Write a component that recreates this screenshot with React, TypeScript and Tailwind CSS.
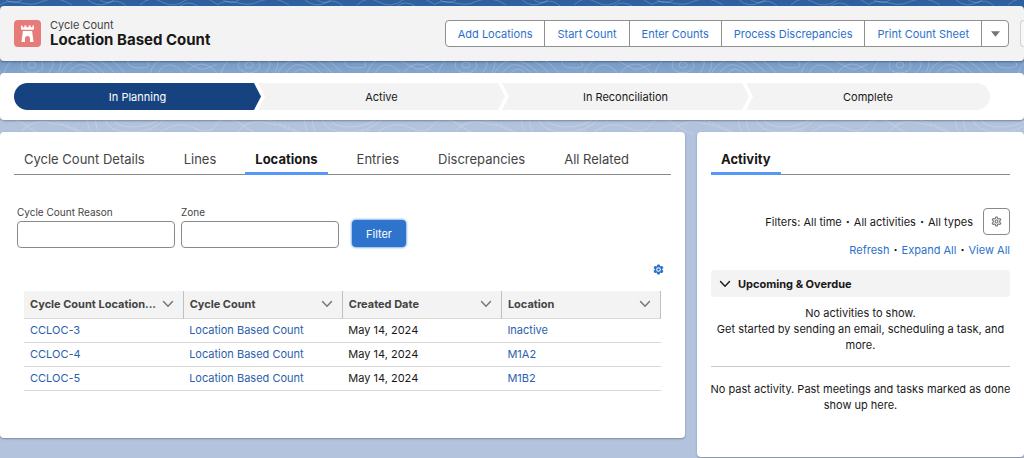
import { useState } from "react";

const actions = ["Add Locations", "Start Count", "Enter Counts", "Process Discrepancies", "Print Count Sheet"];
const stages = ["In Planning", "Active", "In Reconciliation", "Complete"];
const tabs = ["Cycle Count Details", "Lines", "Locations", "Entries", "Discrepancies", "All Related"];
const columns = ["Cycle Count Location...", "Cycle Count", "Created Date", "Location"];
const rows = [
  { id: "CCLOC-3", count: "Location Based Count", date: "May 14, 2024", location: "Inactive" },
  { id: "CCLOC-4", count: "Location Based Count", date: "May 14, 2024", location: "M1A2" },
  { id: "CCLOC-5", count: "Location Based Count", date: "May 14, 2024", location: "M1B2" },
];

function Contours() {
  return (
    <svg className="absolute inset-0 -z-10 h-40 w-full" aria-hidden="true">
      <defs>
        <pattern id="contours" width="217" height="160" patternUnits="userSpaceOnUse">
          <g fill="none" stroke="#fff" strokeOpacity="0.2" strokeWidth="1">
            <ellipse cx="32" cy="65" rx="4" ry="3" />
            <ellipse cx="32" cy="65" rx="11" ry="8" />
            <path d="M4 73C10 56 24 50 40 52S56 66 48 73" />
            <path d="M-6 73C2 48 24 44 42 47S66 62 56 75" />
            <path d="M60 74C72 52 92 60 104 73M68 74C78 58 90 66 98 74M76 74q8-10 16 0" />
            <path d="M50 62C72 50 96 52 116 74M54 58C78 46 104 48 126 74" />
            <path d="M128 60q10-8 18 0t-6 8-12-8M150 74C154 58 170 54 186 62S200 72 217 64" />
            <path d="M158 74C162 62 176 62 184 74M186 74C194 62 206 60 217 73" />
            <path d="M0 5C12-4 26 8 38 3S60-3 72 5M88 0q10 8 20 3t18 3M140 5q10-10 22-3t24-2 31 4" />
            <path d="M100 0q8 5 14 0M180 6q8-6 18 0M6 0q8 5 16 0" />
            <path d="M0 122q14-6 24 2t18 10M20 134q8-14 26-12t34 10M88 118q-2 12 8 18M96 118q-2 10 6 18" />
            <path d="M104 118q4 14 26 14t34-12M112 118q4 9 20 9t28-8M160 132q18-12 34-4t23-4" />
            <path d="M120 132q14 3 34-2M52 120q14 4 30 12" strokeDasharray="3 2" />
            <path d="M4 136q5 14-4 22M12 136q6 18-6 28M208 136q-10 12 9 22" />
          </g>
        </pattern>
      </defs>
      <rect width="100%" height="100%" fill="url(#contours)" />
    </svg>
  );
}

function Castle() {
  return (
    <svg viewBox="0 0 27 27" className="size-[27px] rounded bg-[#e77b79]" aria-hidden="true">
      <path
        fill="#fff"
        d="M7 5.600h1.500v1.700h1.900V5.600h2v1.700h2.200V5.600h2v1.700h1.900V5.600H20v3.200a1 1 0 0 1-1 1H8a1 1 0 0 1-1-1zM8.900 11h9.200l1.400 10.400a.5.5 0 0 1-.5.600h-3V18.400a2.500 2.500 0 0 0-5 0V22H8a.5.5 0 0 1-.5-.6z"
      />
    </svg>
  );
}

const gearPath =
  "M10.300 2.300h3.400l.7 3.200 2 1.100 3.200-1 1.700 2.900-2.400 2.300v2.400l2.400 2.300-1.700 2.900-3.200-1-2 1.100-.7 3.200h-3.400l-.7-3.200-2-1.100-3.200 1-1.700-2.900 2.400-2.300v-2.400L2.700 8.500l1.700-2.900 3.200 1 2-1.100z";

function Gear({ className, solid = false }: { className: string; solid?: boolean }) {
  return (
    <svg viewBox="0 0 24 24" className={className} aria-hidden="true" fill="none" stroke="currentColor">
      <path strokeWidth="2.400" strokeLinejoin="round" fill={solid ? "currentColor" : "none"} d={gearPath} />
      {solid ? (
        <circle cx="12" cy="12" r="4" stroke="#fff" strokeWidth="2.200" />
      ) : (
        <circle cx="12" cy="12" r="3.200" strokeWidth="2.400" />
      )}
    </svg>
  );
}

function Chevron({ className }: { className: string }) {
  return (
    <svg viewBox="0 0 12 12" className={className} aria-hidden="true">
      <path d="M1.500 3.500L6 8.300l4.500-4.800" fill="none" stroke="currentColor" strokeWidth="1.400" strokeLinecap="round" />
    </svg>
  );
}

function Dot() {
  return <span className="mx-1 font-black">·</span>;
}

export default function App() {
  const [tab, setTab] = useState("Locations");

  return (
    <main className="relative isolate flex min-h-screen flex-col gap-3 overflow-hidden bg-[#b3c3dd] bg-[linear-gradient(180deg,#2c5f9e_0px,#2f62a0_6px,#6b92c2_56px,#86a5cd_72px,#b3c3dd_124px)] bg-no-repeat pt-[6px] font-['Inter','Liberation_Sans',sans-serif] text-[11px] leading-4 text-[#181818]">
      <Contours />

      <header className="flex h-[55px] items-center rounded bg-[#f3f3f3] pl-[14px] shadow-[0_1px_2px_rgba(0,0,0,0.3)]">
        <Castle />
        <div className="ml-[9px] grow">
          <p className="leading-[13px] text-[#444]">Cycle Count</p>
          <h1 className="text-[15px] leading-4 font-bold">Location Based Count</h1>
        </div>
        <div className="flex h-[27px] divide-x divide-[#8f8f8f] overflow-hidden rounded border border-[#8f8f8f] bg-white text-[#2b71cb]">
          {actions.map((action) => (
            <button key={action} className="px-3 whitespace-nowrap">
              {action}
            </button>
          ))}
          <button aria-label="More actions" className="flex w-[26px] items-center justify-center text-[#747474]">
            <svg viewBox="0 0 10 6" className="h-[6px] w-[9px]" aria-hidden="true">
              <path d="M0 0h10L5 6z" fill="currentColor" />
            </svg>
          </button>
        </div>
        <div className="ml-[11px] h-[27px] w-[4px] rounded-l border border-r-0 border-[#d0d0d0] bg-[#f8f8f8]" />
      </header>

      <nav aria-label="Stage" className="rounded bg-white py-[10px] pr-[34px] pl-[14px] shadow-[0_1px_2px_rgba(0,0,0,0.3)]">
        <ol className="flex h-[27px] overflow-hidden rounded-full">
          {stages.map((stage, i) => (
            <li key={stage} className="flex flex-1">
              <a
                href="#"
                className={
                  i === 0
                    ? "-mr-[3px] flex grow items-center justify-center bg-[#16437f] text-white [clip-path:polygon(0_0,calc(100%-7px)_0,100%_50%,calc(100%-7px)_100%,0_100%)]"
                    : i === stages.length - 1
                      ? "flex grow items-center justify-center bg-[#f3f3f3] [clip-path:polygon(0_0,100%_0,100%_100%,0_100%,7px_50%)]"
                      : "-mr-[3px] flex grow items-center justify-center bg-[#f3f3f3] [clip-path:polygon(0_0,calc(100%-7px)_0,100%_50%,calc(100%-7px)_100%,0_100%,7px_50%)]"
                }
              >
                {stage}
              </a>
            </li>
          ))}
        </ol>
      </nav>

      <div className="flex grow items-start gap-3">
        <section className="min-w-0 grow rounded bg-white px-[14px] pt-[10px] pb-[47px] shadow-[0_1px_2px_rgba(0,0,0,0.3)]">
          <div role="tablist" className="flex h-[33px] gap-[19px] border-b border-[#8a8a8a] text-[13px]">
            {tabs.map((name) => (
              <button
                key={name}
                role="tab"
                aria-selected={name === tab}
                onClick={() => setTab(name)}
                className={
                  name === tab
                    ? "-mb-px border-b-3 border-[#5797f5] px-[10px] pt-1 font-bold whitespace-nowrap"
                    : "-mb-px border-b-3 border-transparent px-[10px] pt-1 whitespace-nowrap text-[#444]"
                }
              >
                {name}
              </button>
            ))}
          </div>

          <form className="mt-[29px] flex items-end gap-[6px] pl-[3px]" onSubmit={(e) => e.preventDefault()}>
            <label className="flex w-[158px] flex-col gap-px text-[10px] text-[#444]">
              Cycle Count Reason
              <input className="h-[27px] rounded border border-[#8a8a8a] px-2 text-[11px]" />
            </label>
            <label className="flex w-[158px] flex-col gap-px text-[10px] text-[#444]">
              Zone
              <input className="h-[27px] rounded border border-[#8a8a8a] px-2 text-[11px]" />
            </label>
            <button className="mb-px ml-[7px] h-[27px] w-[54px] rounded bg-[#2e74cc] text-white shadow-[0_0_2px_1px_#8db8ee]">Filter</button>
          </form>

          <div className="mt-4 flex justify-end pr-[7px]">
            <button aria-label="Table settings" className="text-[#2b71cb]">
              <Gear className="size-[11px]" solid />
            </button>
          </div>

          <div className="mt-4 pr-[10px] pl-[10px]">
            <table className="w-full table-fixed border-collapse text-left">
              <thead>
                <tr className="h-[27px] border-b border-[#dddbda] bg-[#f3f3f3] text-[#444]">
                  {columns.map((column) => (
                    <th key={column} className="border-r border-[#c0c0c0] p-0 px-[6px] font-bold">
                      <div className="flex items-center justify-between whitespace-nowrap">
                        {column}
                        <Chevron className="mr-[3px] size-[12px] shrink-0 text-[#747474]" />
                      </div>
                    </th>
                  ))}
                </tr>
              </thead>
              <tbody>
                {rows.map((row) => (
                  <tr key={row.id} className="h-[24px] border-b border-[#d8d8d8] text-[#2a61ad]">
                    <td className="px-[6px]"><a href="#">{row.id}</a></td>
                    <td className="px-[6px]"><a href="#">{row.count}</a></td>
                    <td className="px-[6px] text-[#181818]">{row.date}</td>
                    <td className="px-[6px]"><a href="#">{row.location}</a></td>
                  </tr>
                ))}
              </tbody>
            </table>
          </div>
        </section>

        <aside className="w-[327px] shrink-0 rounded bg-white px-[14px] pt-[10px] pb-11 shadow-[0_1px_2px_rgba(0,0,0,0.3)]">
          <div className="flex h-[33px] border-b border-[#8a8a8a] text-[13px]">
            <h2 className="-mb-px flex items-center border-b-3 border-[#5797f5] px-[10px] pt-1 font-bold">Activity</h2>
          </div>
          <div className="mt-[33px] flex items-center justify-end gap-[10px]">
            <p>
              Filters: All time
              <Dot />
              All activities
              <Dot />
              All types
            </p>
            <button aria-label="Filter settings" className="flex size-[27px] items-center justify-center rounded border border-[#8a8a8a] text-[#747474]">
              <Gear className="size-[11px]" />
            </button>
          </div>
          <p className="mt-[7px] text-right">
            <a href="#" className="text-[#2b71cb]">Refresh</a>
            <Dot />
            <a href="#" className="text-[#2b71cb]">Expand All</a>
            <Dot />
            <a href="#" className="text-[#2b71cb]">View All</a>
          </p>
          <button className="mt-3 flex h-[27px] w-full items-center gap-[7px] rounded bg-[#f3f3f3] px-2 font-bold">
            <Chevron className="size-[12px]" />
            Upcoming &amp; Overdue
          </button>
          <p className="mt-2 text-center">
            No activities to show.
            <br />
            Get started by sending an email, scheduling a task, and more.
          </p>
          <hr className="mt-[13px] border-[#c9c9c9]" />
          <p className="-mx-2 mt-[14px] text-center">
            No past activity. Past meetings and tasks marked as done show up here.
          </p>
        </aside>
      </div>
    </main>
  );
}
